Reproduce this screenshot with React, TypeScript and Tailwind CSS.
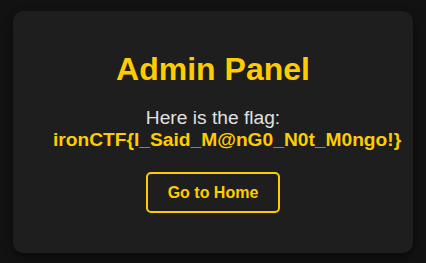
import React from 'react';

const App: React.FC = () => {
  return (
    <div className="flex h-[263px] w-full items-center justify-center bg-[#121212] font-['Liberation_Sans',Arial,sans-serif]">
      <div className="w-[400px] rounded-[10px] bg-[#1e1e1e] p-10 text-center shadow-[0_4px_10px_rgba(0,0,0,0.5)]">
        <h1 className="text-[32px] font-bold leading-[36px] text-[#ffcc00]">Admin Panel</h1>

        {/* Flag */}
        <p className="mt-5 text-[19.2px] leading-[22px] text-[#e0e0e0]">
          Here is the flag: <strong className="font-bold text-[#ffcc00]">ironCTF{'{'}I_Said_M@nG0_N0t_M0ngo!{'}'}</strong>
        </p>

        <button className="mt-[21px] rounded-[5px] border-2 border-[#ffcc00] bg-transparent px-5 py-2.5 text-[16px] font-bold leading-[17px] text-[#ffcc00]">
          Go to Home
        </button>
      </div>
    </div>
  );
};

export default App;
